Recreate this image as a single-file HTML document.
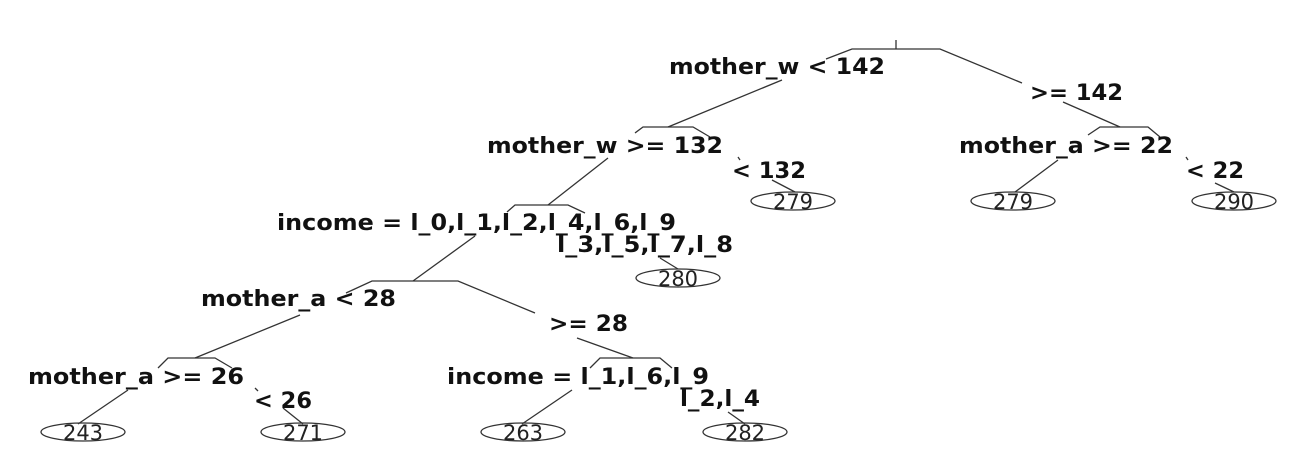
<!DOCTYPE html>
<html><head><style>html,body{margin:0;padding:0;background:#fff}svg{display:block}</style></head>
<body>
<svg width="1298" height="474" xmlns="http://www.w3.org/2000/svg" font-family="DejaVu Sans, Liberation Sans, sans-serif">
<g stroke="#333" stroke-width="1.3" fill="none">
<line x1="896" y1="40" x2="896" y2="49"/>
<polyline points="826,59 852,49 940,49 1022,83"/>
<line x1="782" y1="80" x2="668" y2="127"/>
<polyline points="635,133 643,127 693,127 710,137"/>
<line x1="738" y1="157" x2="740" y2="160"/>
<line x1="772" y1="180" x2="795" y2="192"/>
<line x1="608" y1="158" x2="548" y2="205"/>
<polyline points="507,212 515,205 568,205 585,213"/>
<line x1="660" y1="258" x2="678" y2="269"/>
<line x1="475" y1="236" x2="413" y2="281"/>
<polyline points="346,293 372,281 458,281 535,313"/>
<line x1="300" y1="315" x2="195" y2="358"/>
<line x1="577" y1="338" x2="633" y2="358"/>
<polyline points="158,368 168,358 215,358 232,368"/>
<line x1="255" y1="388" x2="258" y2="391"/>
<line x1="128" y1="390" x2="78" y2="424"/>
<line x1="283" y1="408" x2="303" y2="424"/>
<polyline points="590,368 600,358 660,358 672,368"/>
<line x1="572" y1="390" x2="522" y2="424"/>
<line x1="728" y1="412" x2="745" y2="424"/>
<line x1="1063" y1="102" x2="1120" y2="127"/>
<polyline points="1088,135 1100,127 1148,127 1160,137"/>
<line x1="1058" y1="160" x2="1015" y2="192"/>
<line x1="1186" y1="157" x2="1188" y2="160"/>
<line x1="1215" y1="183" x2="1234" y2="192"/>
<ellipse cx="793" cy="201" rx="42" ry="9"/>
<ellipse cx="678" cy="278" rx="42" ry="9"/>
<ellipse cx="1013" cy="201" rx="42" ry="9"/>
<ellipse cx="1234" cy="201" rx="42" ry="9"/>
<ellipse cx="83" cy="432" rx="42" ry="9"/>
<ellipse cx="303" cy="432" rx="42" ry="9"/>
<ellipse cx="523" cy="432" rx="42" ry="9"/>
<ellipse cx="745" cy="432" rx="42" ry="9"/>
</g>
<g font-weight="bold" font-size="22" fill="#111">
<text x="669" y="74" textLength="216" lengthAdjust="spacingAndGlyphs">mother_w &lt; 142</text>
<text x="1030" y="100" textLength="93" lengthAdjust="spacingAndGlyphs">&gt;= 142</text>
<text x="487" y="153" textLength="236" lengthAdjust="spacingAndGlyphs">mother_w &gt;= 132</text>
<text x="732" y="178" textLength="74" lengthAdjust="spacingAndGlyphs">&lt; 132</text>
<text x="277" y="230" textLength="399" lengthAdjust="spacingAndGlyphs">income = l_0,l_1,l_2,l_4,l_6,l_9</text>
<text x="557" y="252" textLength="176" lengthAdjust="spacingAndGlyphs">l_3,l_5,l_7,l_8</text>
<text x="201" y="306" textLength="195" lengthAdjust="spacingAndGlyphs">mother_a &lt; 28</text>
<text x="549" y="331" textLength="79" lengthAdjust="spacingAndGlyphs">&gt;= 28</text>
<text x="28" y="384" textLength="216" lengthAdjust="spacingAndGlyphs">mother_a &gt;= 26</text>
<text x="254" y="408" textLength="58" lengthAdjust="spacingAndGlyphs">&lt; 26</text>
<text x="447" y="384" textLength="262" lengthAdjust="spacingAndGlyphs">income = l_1,l_6,l_9</text>
<text x="680" y="406" textLength="80" lengthAdjust="spacingAndGlyphs">l_2,l_4</text>
<text x="959" y="153" textLength="214" lengthAdjust="spacingAndGlyphs">mother_a &gt;= 22</text>
<text x="1186" y="178" textLength="58" lengthAdjust="spacingAndGlyphs">&lt; 22</text>
</g>
<g font-size="21" fill="#222" text-anchor="middle">
<text x="793" y="209">279</text>
<text x="678" y="286">280</text>
<text x="1013" y="209">279</text>
<text x="1234" y="209">290</text>
<text x="83" y="440">243</text>
<text x="303" y="440">271</text>
<text x="523" y="440">263</text>
<text x="745" y="440">282</text>
</g>
</svg>
</body></html>
